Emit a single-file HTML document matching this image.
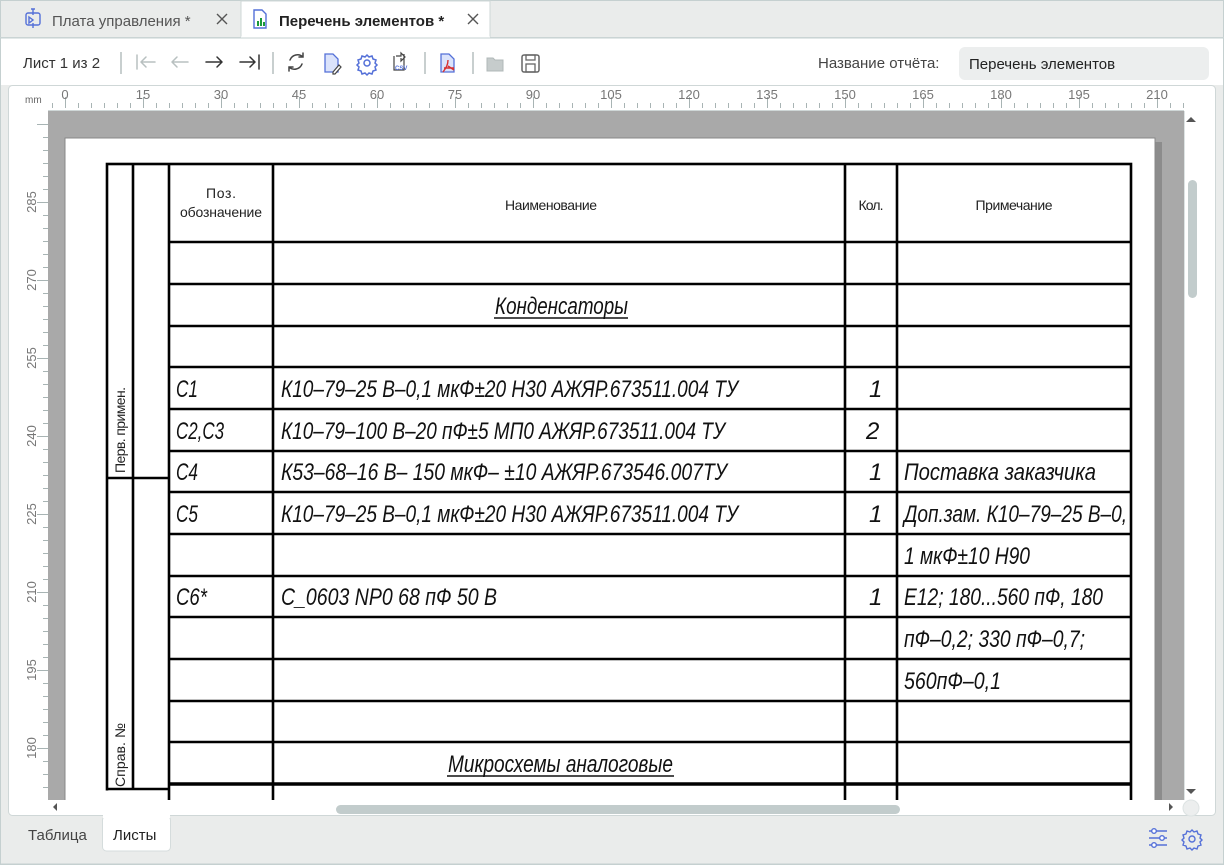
<!DOCTYPE html>
<html><head><meta charset="utf-8"><style>
html,body{margin:0;padding:0;width:1224px;height:865px;overflow:hidden;background:#eaeceb;font-family:"Liberation Sans","DejaVu Sans",sans-serif;}
.abs{position:absolute}
</style></head><body>
<svg class="abs" style="left:0;top:0" width="1224" height="865" xmlns="http://www.w3.org/2000/svg" font-family="Liberation Sans, DejaVu Sans, sans-serif">
<defs>
<pattern id="tmin" patternUnits="userSpaceOnUse" x="65" y="0" width="13" height="865"><line x1="0.5" y1="103" x2="0.5" y2="108" stroke="#a8b4b4" stroke-width="1"/></pattern>
<pattern id="tmaj" patternUnits="userSpaceOnUse" x="65" y="0" width="78" height="865"><line x1="0.5" y1="97" x2="0.5" y2="108" stroke="#a8b4b4" stroke-width="1"/></pattern>
<pattern id="lmin" patternUnits="userSpaceOnUse" x="0" y="202" width="60" height="13"><line x1="43" y1="0.5" x2="48" y2="0.5" stroke="#a8b4b4"/></pattern>
<pattern id="lmaj" patternUnits="userSpaceOnUse" x="0" y="202" width="60" height="78"><line x1="37" y1="0.5" x2="48" y2="0.5" stroke="#a8b4b4"/></pattern>
<clipPath id="area"><rect x="48" y="111" width="1136" height="689"/></clipPath>
</defs>
<rect x="0.5" y="0.5" width="1223" height="864" fill="#eaeceb" stroke="#c5d0d0"/>
<line x1="0" y1="37.5" x2="1224" y2="37.5" stroke="#cfd7d7"/>
<rect x="241" y="1" width="249" height="37" fill="#fff" stroke="#cfd7d7"/>
<line x1="241" y1="37.5" x2="490" y2="37.5" stroke="#fff" stroke-width="2"/>
<g fill="none" stroke="#5470d8" stroke-width="1.4">
<rect x="26" y="13" width="14" height="12" rx="2"/><path d="M33 9v6M29 17l4 3-4 3zM33 23v5M31 9h4"/>
</g>
<text x="52" y="26" font-size="15" fill="#555">Плата управления *</text>
<path d="M217 14l10 10M227 14l-10 10" stroke="#555" stroke-width="1.4"/>
<path d="M254 10h8l4 4v14h-12z" fill="#fff" stroke="#5470d8" stroke-width="1.4"/>
<rect x="257" y="21" width="2" height="5" fill="#1a9a3a"/><rect x="260" y="18" width="2" height="8" fill="#1a9a3a"/><rect x="263" y="22" width="2" height="4" fill="#1a9a3a"/>
<text x="279" y="26" font-size="15" font-weight="bold" fill="#222">Перечень элементов *</text>
<path d="M468 14l10 10M478 14l-10 10" stroke="#555" stroke-width="1.4"/>
<rect x="0" y="38" width="1224" height="47" fill="#fff"/>
<rect x="0.5" y="38" width="1223" height="826" fill="none" stroke="#c5d0d0"/>
<text x="23" y="68" font-size="15" fill="#333">Лист 1 из 2</text>
<g stroke="#c8cfcf" stroke-width="2"><line x1="121" y1="52" x2="121" y2="74"/><line x1="273" y1="52" x2="273" y2="74"/><line x1="425" y1="52" x2="425" y2="74"/><line x1="473" y1="52" x2="473" y2="74"/></g>
<g fill="none" stroke-width="1.5" stroke-linecap="round">
<path d="M137 55v14M141 62h14M141 62l5-5M141 62l5 5" stroke="#b8c0c0"/>
<path d="M172 62h16M172 62l5-5M172 62l5 5" stroke="#b8c0c0"/>
<path d="M206 62h16M222 62l-5-5M222 62l-5 5" stroke="#333"/>
<path d="M240 62h15M255 62l-5-5M255 62l-5 5M259 55v14" stroke="#333"/>
<path d="M303 57a8 8 0 0 0-13 3M289 67a8 8 0 0 0 13-3M303 53v4h-4M289 71v-4h4" stroke="#444"/>
</g>
<path d="M325 54h8l5 5v13h-13z" fill="#dbe3fb" stroke="#5470d8" stroke-width="1.3"/>
<path d="M333 72l6-7 2 2-6 7h-2z" fill="#fff" stroke="#444" stroke-width="1.2"/>
<g fill="none" stroke="#5470d8" stroke-width="1.5"><circle cx="367" cy="63" r="3"/><path d="M367 55l2 2 3-1 1 3 3 1-1 3 2 2-2 2 1 3-3 1-1 3-3-1-2 2-2-2-3 1-1-3-3-1 1-3-2-2 2-2-1-3 3-1 1-3 3 1z"/></g>
<path d="M396 56h5v-3l4 4-4 4v-3M404 54v16h-10v-14" fill="none" stroke="#444" stroke-width="1.2"/>
<text x="395" y="70" font-size="6" font-weight="bold" fill="#5470d8">CSV</text>
<path d="M441 54h8l5 5v13h-13z" fill="#dbe3fb" stroke="#5470d8" stroke-width="1.3"/>
<path d="M448 60c0 6-3 9-5 12M448 66l6 4M444 68h10" stroke="#d83030" stroke-width="1.4" fill="none"/>
<path d="M487 58h6l2 2h8v11h-16z" fill="#c6cccc" stroke="#b0b8b8"/>
<rect x="522" y="55" width="17" height="17" rx="2" fill="none" stroke="#666" stroke-width="1.5"/><rect x="526" y="55" width="9" height="5" fill="none" stroke="#666" stroke-width="1.3"/><rect x="526" y="64" width="9" height="8" fill="none" stroke="#666" stroke-width="1.3"/>
<text x="818" y="68" font-size="15" fill="#444">Название отчёта:</text>
<rect x="959" y="47" width="250" height="33" rx="6" fill="#eceeee"/>
<text x="969" y="69" font-size="15" fill="#222">Перечень элементов</text>
<rect x="8.5" y="85.5" width="1207" height="730" rx="4" fill="#fff" stroke="#cfd7d7"/>
<rect x="48" y="111" width="1136" height="689" fill="#a9a9a9"/>
<rect x="50" y="95" width="1134" height="15" fill="url(#tmin)"/>
<rect x="50" y="95" width="1134" height="15" fill="url(#tmaj)"/>
<line x1="48" y1="110.5" x2="1184" y2="110.5" stroke="#cfd7d7"/>
<text x="25" y="103" font-size="10" fill="#666">mm</text>
<g font-size="13" fill="#777" text-anchor="middle">
<text x="65" y="99">0</text><text x="143" y="99">15</text><text x="221" y="99">30</text><text x="299" y="99">45</text><text x="377" y="99">60</text><text x="455" y="99">75</text><text x="533" y="99">90</text><text x="611" y="99">105</text><text x="689" y="99">120</text><text x="767" y="99">135</text><text x="845" y="99">150</text><text x="923" y="99">165</text><text x="1001" y="99">180</text><text x="1079" y="99">195</text><text x="1157" y="99">210</text>
</g>
<rect x="30" y="112" width="18" height="688" fill="url(#lmin)"/>
<rect x="30" y="112" width="18" height="688" fill="url(#lmaj)"/>
<g font-size="13" fill="#777" text-anchor="middle">
<text transform="translate(36,202) rotate(-90)">285</text><text transform="translate(36,280) rotate(-90)">270</text><text transform="translate(36,358) rotate(-90)">255</text><text transform="translate(36,436) rotate(-90)">240</text><text transform="translate(36,514) rotate(-90)">225</text><text transform="translate(36,592) rotate(-90)">210</text><text transform="translate(36,670) rotate(-90)">195</text><text transform="translate(36,748) rotate(-90)">180</text>
</g>
<g clip-path="url(#area)">
<rect x="1155" y="142" width="7" height="700" fill="#8c8c8c"/>
<rect x="65" y="138" width="1090" height="700" fill="#fff" stroke="#888" stroke-width="1"/>
<g stroke="#000" stroke-width="2.6" fill="none">
<rect x="107" y="164" width="1024" height="700"/>
<line x1="133" y1="164" x2="133" y2="789"/>
<line x1="273" y1="164" x2="273" y2="864"/>
<line x1="845" y1="164" x2="845" y2="864"/>
<line x1="897" y1="164" x2="897" y2="864"/>
<line x1="107" y1="478" x2="169" y2="478"/>
<line x1="169" y1="242" x2="1131" y2="242"/>
<line x1="169" y1="284" x2="1131" y2="284"/>
<line x1="169" y1="326" x2="1131" y2="326"/>
<line x1="169" y1="367" x2="1131" y2="367"/>
<line x1="169" y1="409" x2="1131" y2="409"/>
<line x1="169" y1="451" x2="1131" y2="451"/>
<line x1="169" y1="492" x2="1131" y2="492"/>
<line x1="169" y1="534" x2="1131" y2="534"/>
<line x1="169" y1="576" x2="1131" y2="576"/>
<line x1="169" y1="617" x2="1131" y2="617"/>
<line x1="169" y1="659" x2="1131" y2="659"/>
<line x1="169" y1="701" x2="1131" y2="701"/>
<line x1="169" y1="742" x2="1131" y2="742"/>
<line x1="169" y1="784" x2="1131" y2="784" stroke-width="3.5"/>
</g>
<rect x="103" y="790.5" width="65" height="80" fill="#fff"/>
<g stroke="#000" stroke-width="2.6"><line x1="107" y1="789" x2="169" y2="789"/><line x1="169" y1="164" x2="169" y2="864"/></g>
<g font-size="14" fill="#222" text-anchor="middle">
<text x="221" y="198" textLength="30">Поз.</text>
<text x="221" y="217" textLength="82">обозначение</text>
<text x="551" y="210" textLength="92">Наименование</text>
<text x="871" y="210" textLength="25">Кол.</text>
<text x="1014" y="210" textLength="77">Примечание</text>
<text transform="translate(125,430) rotate(-90)" textLength="86">Перв. примен.</text>
<text transform="translate(125,755) rotate(-90)" textLength="64">Справ. №</text>
</g>
<g font-size="24" font-style="italic" fill="#111" xml:space="preserve">
<text x="495" y="314" textLength="133" lengthAdjust="spacingAndGlyphs">Конденсаторы</text>
<line x1="494" y1="318" x2="628" y2="318" stroke="#111" stroke-width="1.5"/>
<text x="176" y="397" textLength="22" lengthAdjust="spacingAndGlyphs">С1</text>
<text x="281" y="397" textLength="457" lengthAdjust="spacingAndGlyphs">К10–79–25 В–0,1 мкФ±20 Н30 АЖЯР.673511.004  ТУ</text>
<text x="869" y="397">1</text>
<text x="176" y="439" textLength="48" lengthAdjust="spacingAndGlyphs">С2,С3</text>
<text x="281" y="439" textLength="444" lengthAdjust="spacingAndGlyphs">К10–79–100 В–20 пФ±5 МП0 АЖЯР.673511.004  ТУ</text>
<text x="866" y="439">2</text>
<text x="176" y="480" textLength="22" lengthAdjust="spacingAndGlyphs">С4</text>
<text x="281" y="480" textLength="446" lengthAdjust="spacingAndGlyphs">К53–68–16 В– 150 мкФ– ±10 АЖЯР.673546.007ТУ</text>
<text x="869" y="480">1</text>
<text x="904" y="480" textLength="192" lengthAdjust="spacingAndGlyphs">Поставка заказчика</text>
<text x="176" y="522" textLength="22" lengthAdjust="spacingAndGlyphs">С5</text>
<text x="281" y="522" textLength="457" lengthAdjust="spacingAndGlyphs">К10–79–25 В–0,1 мкФ±20 Н30 АЖЯР.673511.004  ТУ</text>
<text x="869" y="522">1</text>
<text x="904" y="522" textLength="223" lengthAdjust="spacingAndGlyphs">Доп.зам. К10–79–25 В–0,</text>
<text x="904" y="564" textLength="126" lengthAdjust="spacingAndGlyphs">1 мкФ±10 Н90</text>
<text x="176" y="605" textLength="31" lengthAdjust="spacingAndGlyphs">С6*</text>
<text x="281" y="605" textLength="216" lengthAdjust="spacingAndGlyphs">С_0603 NP0 68 пФ 50 В</text>
<text x="869" y="605">1</text>
<text x="904" y="605" textLength="199" lengthAdjust="spacingAndGlyphs">Е12;   180...560 пФ, 180</text>
<text x="904" y="647" textLength="181" lengthAdjust="spacingAndGlyphs">пФ–0,2; 330 пФ–0,7;</text>
<text x="904" y="689" textLength="97" lengthAdjust="spacingAndGlyphs">560пФ–0,1</text>
<text x="448" y="772" textLength="225" lengthAdjust="spacingAndGlyphs">Микросхемы аналоговые</text>
<line x1="447" y1="776" x2="674" y2="776" stroke="#111" stroke-width="1.5"/>
</g>
</g>
<line x1="1184.5" y1="111" x2="1184.5" y2="800" stroke="#dde3e3"/>
<path d="M1186 122l5-5 5 5z" fill="#555"/>
<path d="M1186 789l5 5 5-5z" fill="#555"/>
<rect x="1188" y="180" width="9" height="118" rx="4.5" fill="#c2cccc"/>
<path d="M57 803l-4 4 4 4z" fill="#555"/>
<path d="M1169 803l4 4-4 4z" fill="#555"/>
<rect x="336" y="805" width="564" height="9" rx="4.5" fill="#c2cccc"/>
<circle cx="1191" cy="808" r="8" fill="#eceeee" stroke="#dde3e3"/>
<rect x="102.5" y="816" width="68" height="35" rx="4" fill="#fff" stroke="#d5dcdc"/>
<rect x="103" y="814" width="67" height="4" fill="#fff"/>
<text x="28" y="840" font-size="15" fill="#444">Таблица</text>
<text x="113" y="840" font-size="15" fill="#222">Листы</text>
<g fill="none" stroke="#5470d8" stroke-width="1.4">
<path d="M1149 831h18M1149 838h18M1149 845h18"/>
<circle cx="1154" cy="831" r="2.3" fill="#fff"/><circle cx="1162" cy="838" r="2.3" fill="#fff"/><circle cx="1154" cy="845" r="2.3" fill="#fff"/>
<circle cx="1192" cy="839" r="3"/><path d="M1192 830l2 2 3-1 1 3 3 1-1 3 2 2-2 2 1 3-3 1-1 3-3-1-2 2-2-2-3 1-1-3-3-1 1-3-2-2 2-2-1-3 3-1 1-3 3 1z"/>
</g>
</svg>
</body></html>
